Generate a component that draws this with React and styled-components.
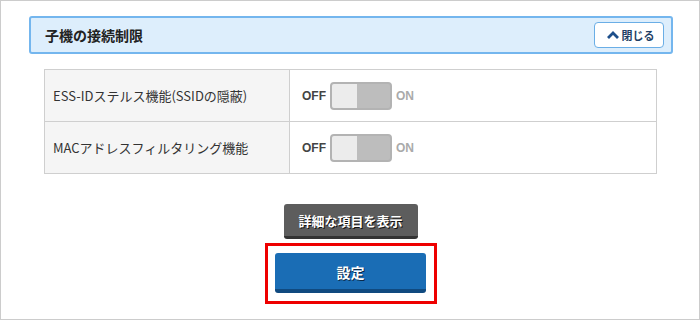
import React from "react";
import styled, { createGlobalStyle } from "styled-components";

const Global = createGlobalStyle`
  html, body { margin: 0; padding: 0; background: #fff; }
  body { font-family: "Noto Sans CJK JP", "Noto Sans", sans-serif; }
  * { box-sizing: border-box; }
`;

const Page = styled.div`
  width: 700px;
  height: 320px;
  border: 1px solid #cccccc;
  padding: 15px 26px 0 28px;
  background: #fff;
`;

const Header = styled.div`
  height: 38px;
  border: 2px solid #74b6ee;
  border-radius: 3px;
  background: #ddeefc;
  display: flex;
  align-items: center;
  justify-content: space-between;
  padding: 0 7px 0 14px;
`;

const Title = styled.h2`
  margin: 0;
  font-size: 14px;
  line-height: 1;
  font-weight: bold;
  color: #222;
`;

const CloseButton = styled.button`
  width: 70px;
  height: 26px;
  border: 1px solid #6aaee6;
  border-radius: 4px;
  background: #fff;
  display: flex;
  align-items: center;
  justify-content: center;
  gap: 2px;
  padding: 0 0 0 2px;
  font-family: inherit;
  font-size: 11px;
  line-height: 1;
  font-weight: bold;
  color: #1f3f66;
  cursor: pointer;
`;

const Section = styled.div`
  padding: 15px 16px 0 15px;
`;

const Table = styled.div`
  border: 1px solid #cfcfcf;
  display: grid;
  grid-template-columns: 245px 1fr;
`;

const LabelCell = styled.div`
  height: ${(p) => (p.$first ? 51 : 52)}px;
  background: #f5f5f5;
  border-right: 1px solid #cfcfcf;
  border-top: ${(p) => (p.$first ? "none" : "1px solid #cfcfcf")};
  display: flex;
  align-items: center;
  padding-left: 8px;
  font-size: 13px;
  line-height: 1;
  color: #333;
`;

const ValueCell = styled.div`
  height: ${(p) => (p.$first ? 51 : 52)}px;
  border-top: ${(p) => (p.$first ? "none" : "1px solid #cfcfcf")};
  display: flex;
  align-items: center;
  padding-left: 12px;
  gap: 4px;
`;

const StateText = styled.span`
  font-family: "Liberation Sans", Arial, sans-serif;
  font-size: 12px;
  line-height: 1;
  font-weight: bold;
  color: ${(p) => (p.$active ? "#444" : "#aaa")};
`;

const Toggle = styled.div`
  width: 62px;
  height: 28px;
  border: 2px solid #b3b3b3;
  border-radius: 4px;
  background: #bdbdbd;
  display: flex;
  overflow: hidden;
`;

const Knob = styled.div`
  width: 25px;
  height: 100%;
  background: #ececec;
`;

const Actions = styled.div`
  display: flex;
  flex-direction: column;
  align-items: center;
  padding-top: 30px;
  gap: 4px;
  margin-right: 1px;
`;

const DetailButton = styled.button`
  display: block;
  width: 134px;
  height: 35px;
  border: none;
  border-bottom: 3px solid #333;
  border-radius: 3px;
  background: #5d5d5d;
  color: #fff;
  font-family: inherit;
  font-size: 13px;
  line-height: 1;
  font-weight: bold;
  text-shadow: 1px 1px 0 #111;
  padding: 1px 0 0;
  cursor: pointer;
`;

const Highlight = styled.div`
  width: 172px;
  height: 61px;
  border: 3px solid #ee0000;
  display: flex;
  justify-content: center;
  align-items: flex-start;
  padding-top: 7px;
`;

const PrimaryButton = styled.button`
  display: block;
  width: 151px;
  height: 40px;
  border: none;
  border-bottom: 4px solid #104a80;
  border-radius: 3px;
  background: #1a6db5;
  color: #fff;
  font-family: inherit;
  font-size: 14px;
  line-height: 1;
  font-weight: bold;
  text-shadow: 1px 1px 0 #0a2a4a;
  padding: 2px 0 0;
  cursor: pointer;
`;

const rows = [
  "ESS-IDステルス機能(SSIDの隠蔽)",
  "MACアドレスフィルタリング機能",
];

export default function App() {
  return (
    <>
      <Global />
      <Page>
        <Header>
          <Title>子機の接続制限</Title>
          <CloseButton>
            <svg width="14" height="10" viewBox="0 0 14 10">
              <path d="M2 8 L7 3 L12 8" fill="none" stroke="#1d4f8b" strokeWidth="2.8" />
            </svg>
            閉じる
          </CloseButton>
        </Header>
        <Section>
          <Table>
            {rows.map((label, i) => (
              <React.Fragment key={label}>
                <LabelCell $first={i === 0}>{label}</LabelCell>
                <ValueCell $first={i === 0}>
                  <StateText $active>OFF</StateText>
                  <Toggle>
                    <Knob />
                  </Toggle>
                  <StateText>ON</StateText>
                </ValueCell>
              </React.Fragment>
            ))}
          </Table>
        </Section>
        <Actions>
          <DetailButton>詳細な項目を表示</DetailButton>
          <Highlight>
            <PrimaryButton>設定</PrimaryButton>
          </Highlight>
        </Actions>
      </Page>
    </>
  );
}
